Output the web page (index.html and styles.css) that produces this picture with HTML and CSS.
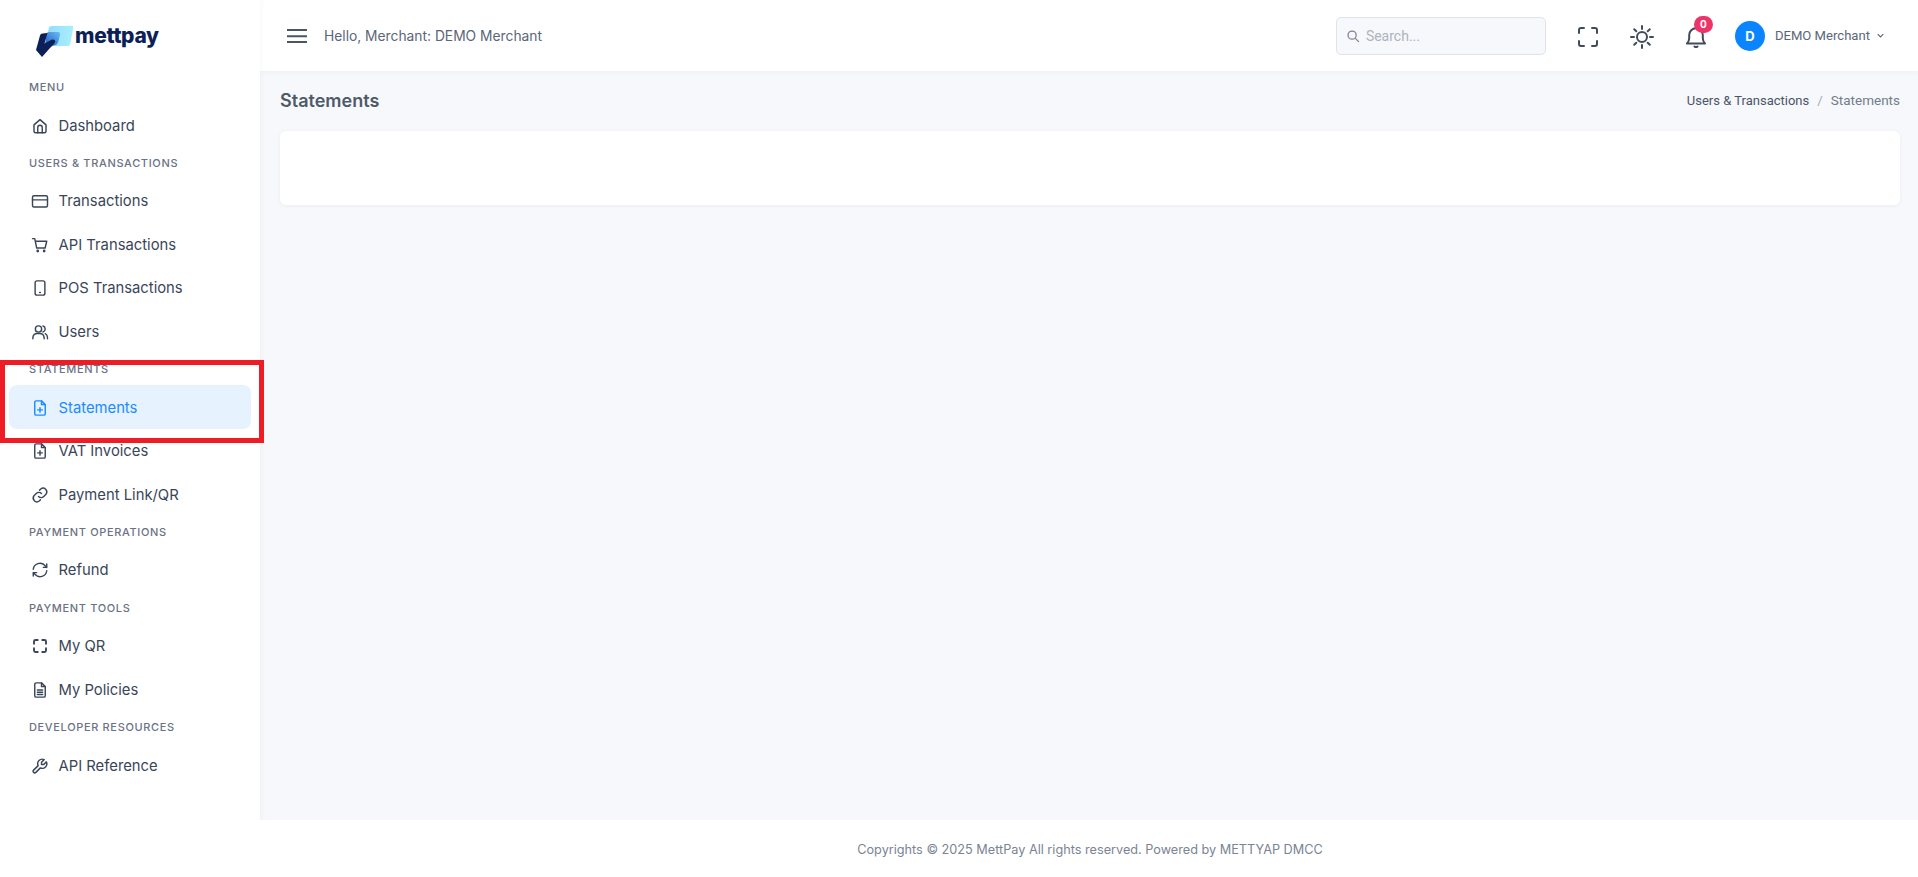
FILE: index.html
```html
<!DOCTYPE html>
<html lang="en">
<head>
<meta charset="utf-8">
<title>Statements</title>
<link rel="stylesheet" href="styles.css">
</head>
<body>
<div class="app">
  <aside class="sidebar">
    <div class="brand">
      <svg class="brand-mark" viewBox="0 0 40 34" width="40" height="34">
        <defs>
          <linearGradient id="g1" x1="0" y1="0" x2="1" y2="0"><stop offset="0" stop-color="#8fdcf8"/><stop offset="1" stop-color="#a9effd"/></linearGradient>
          <linearGradient id="g2" x1="0" y1="1" x2="1" y2="0"><stop offset="0" stop-color="#1c5fc9"/><stop offset="1" stop-color="#6cbcf2"/></linearGradient>
        </defs>
        <path d="M13 2.500Q13.600 1 15.500 1L36 .8Q37.600.8 37.300 2.500L34.200 19Q33.800 21 32.200 21L9 21Z" fill="url(#g1)"/>
        <path d="M10.500 8.500Q11 7 13 7H22Q24.500 7 24 9.500L22.500 16Q21.500 20.500 17 20.500H9Z" fill="url(#g2)"/>
        <path d="M0 25 4 10.500Q4.500 8.500 6.500 8.500L11.500 8 8.500 18.500 16 14.500Q20 14 19 17.500 17.500 20 14 23L6 32Z" fill="#0c1f56"/>
      </svg>
      <span class="brand-name">mettpay</span>
    </div>
    <nav class="nav">
      <div class="nav-label">Menu</div>
      <a class="nav-item"><svg class="ico" viewBox="0 0 24 24"><path d="M4 10.500 12 3.500l8 7V19a2 2 0 0 1-2 2H6a2 2 0 0 1-2-2Z"/><path d="M9 21v-7a3 3 0 0 1 6 0v7"/></svg>Dashboard</a>
      <div class="nav-label">Users &amp; Transactions</div>
      <a class="nav-item"><svg class="ico" viewBox="0 0 24 24"><rect x="2" y="5" width="20" height="15" rx="2"/><path d="M2 10.500h20"/></svg>Transactions</a>
      <a class="nav-item"><svg class="ico" viewBox="0 0 24 24"><path d="M2 3.500h3l2.600 12.500h11.200L21 7H6"/><circle cx="9" cy="20" r=".9"/><circle cx="17.500" cy="20" r=".9"/></svg>API Transactions</a>
      <a class="nav-item"><svg class="ico" viewBox="0 0 24 24"><rect x="5.500" y="2.500" width="13" height="19" rx="2.500"/><path d="M11.500 18h1"/></svg>POS Transactions</a>
      <a class="nav-item"><svg class="ico" viewBox="0 0 24 24"><circle cx="10" cy="8" r="4.200"/><path d="M2.500 21v-1.500a6 6 0 0 1 6-5.500h3a6 6 0 0 1 6 5.500V21"/><path d="M16 4a4.200 4.200 0 0 1 0 8M19 14.300a6 6 0 0 1 3 5.200V21"/></svg>Users</a>
      <div class="nav-label">Statements</div>
      <a class="nav-item active"><svg class="ico" viewBox="0 0 24 24"><path d="M14 2.500H7a2 2 0 0 0-2 2v15a2 2 0 0 0 2 2h10a2 2 0 0 0 2-2V7.500Z"/><path d="M14 2.500v5h5"/><path d="M12 11.500v6M9 14.500h6"/></svg>Statements</a>
      <a class="nav-item"><svg class="ico" viewBox="0 0 24 24"><path d="M14 2.500H7a2 2 0 0 0-2 2v15a2 2 0 0 0 2 2h10a2 2 0 0 0 2-2V7.500Z"/><path d="M14 2.500v5h5"/><path d="M12 11.500v6M9 14.500h6"/></svg>VAT Invoices</a>
      <a class="nav-item"><svg class="ico" viewBox="0 0 24 24"><path d="M10 14a5 5 0 0 0 7 0l3-3a5 5 0 0 0-7-7l-1.500 1.500"/><path d="M14 10a5 5 0 0 0-7 0l-3 3a5 5 0 0 0 7 7l1.500-1.500"/></svg>Payment Link/QR</a>
      <div class="nav-label">Payment Operations</div>
      <a class="nav-item"><svg class="ico" viewBox="0 0 24 24"><path d="M3 11a9 9 0 0 1 15.500-5L21 8.500V4M21 8.500h-4.500"/><path d="M21 13a9 9 0 0 1-15.500 5L3 15.500V20M3 15.500h4.500"/></svg>Refund</a>
      <div class="nav-label">Payment Tools</div>
      <a class="nav-item"><svg class="ico ico-bold" viewBox="0 0 24 24"><path d="M4 9V6a2 2 0 0 1 2-2h3M15 4h3a2 2 0 0 1 2 2v3M20 15v3a2 2 0 0 1-2 2h-3M9 20H6a2 2 0 0 1-2-2v-3"/></svg>My QR</a>
      <a class="nav-item"><svg class="ico" viewBox="0 0 24 24"><path d="M14 2.500H7a2 2 0 0 0-2 2v15a2 2 0 0 0 2 2h10a2 2 0 0 0 2-2V7.500Z"/><path d="M14 2.500v5h5M8.500 12h7M8.500 15h7M8.500 18h7"/></svg>My Policies</a>
      <div class="nav-label">Developer Resources</div>
      <a class="nav-item"><svg class="ico" viewBox="0 0 24 24"><path transform="matrix(-1 0 0 1 24 0)" d="M7 10h3V7L6.500 3.500a6 6 0 0 1 8 8l6 6a2 2 0 0 1-3 3l-6-6a6 6 0 0 1-8-8L7 10"/></svg>API Reference</a>
    </nav>
  </aside>

  <div class="main">
    <header class="topbar">
      <svg class="burger" viewBox="0 0 20 14" width="20" height="14"><path d="M0 1h20M0 7.300h20M0 13h20"/></svg>
      <span class="hello">Hello, Merchant: DEMO Merchant</span>
      <div class="top-right">
        <div class="search">
          <svg class="search-ico" viewBox="0 0 24 24" width="14" height="14"><circle cx="10.500" cy="10.500" r="7"/><path d="m16 16 6 6"/></svg>
          <span class="search-text">Search...</span>
        </div>
        <svg class="tool tool-scan" viewBox="0 0 20 20" width="20" height="20"><path d="M1 6V3a2 2 0 0 1 2-2h3M14 1h3a2 2 0 0 1 2 2v3M19 14v3a2 2 0 0 1-2 2h-3M6 19H3a2 2 0 0 1-2-2v-3"/></svg>
        <svg class="tool tool-sun" viewBox="0 0 24 24" width="24" height="24"><circle cx="12" cy="12" r="5"/><path d="M12 1v3M12 20v3M1 12h3M20 12h3M4.200 4.200l2.100 2.100M17.700 17.700l2.100 2.100M4.200 19.800l2.100-2.100M17.700 6.300l2.100-2.100"/></svg>
        <div class="bell-wrap">
          <svg class="tool" viewBox="0 0 20 22" width="20" height="22"><path d="M1 17.500h18c-1.600-1.600-2.200-3-2.200-5.500V9A6.800 6.800 0 0 0 3.200 9v3c0 2.500-.6 3.900-2.200 5.500Z"/><path d="M8.500 20.500q1.500 1.300 3 0"/></svg>
          <span class="badge">0</span>
        </div>
        <div class="user">
          <span class="avatar">D</span>
          <span class="user-name">DEMO Merchant</span>
          <svg class="chev" viewBox="0 0 10 6" width="7" height="5"><path d="m1 1 4 4 4-4"/></svg>
        </div>
      </div>
    </header>
    <main class="content">
      <div class="page-head">
        <h1 class="page-title">Statements</h1>
        <div class="crumbs"><span class="crumb">Users &amp; Transactions</span><span class="crumb-sep">/</span><span class="crumb-now">Statements</span></div>
      </div>
      <div class="card"></div>
    </main>
    <footer class="footer">Copyrights © 2025 MettPay All rights reserved. Powered by METTYAP DMCC</footer>
  </div>
</div>
<div class="highlight"></div>
</body>
</html>
```

FILE: styles.css
```css
* { box-sizing: border-box; }
html, body { margin: 0; height: 100%; }
body { font-family: "Inter", "Liberation Sans", sans-serif; color: #4a5568; background: #fff; position: relative; overflow: hidden; }
.app { display: flex; height: 877px; }

.sidebar { width: 260px; flex: none; background: #fff; box-shadow: 0 0 6px rgba(60, 70, 100, .06); position: relative; z-index: 2; }
.brand { height: 71px; display: flex; align-items: flex-start; padding: 25px 0 0 36px; }
.brand-mark { flex: none; }
.brand-name { font-family: "Inter", sans-serif; font-weight: 800; font-size: 21px; line-height: 22px; color: #0c1f56; margin-left: -1px; letter-spacing: -.3px; }

.nav { display: flex; flex-direction: column; }
.nav-label { height: 32.300px; padding: 8px 0 0 29px; font-size: 11px; line-height: 16px; font-weight: 500; letter-spacing: .65px; text-transform: uppercase; color: #6b7285; }
.nav-item { height: 43.500px; margin: 0 9px; padding: 1px 0 0 22px; border-radius: 8px; display: flex; align-items: center; gap: 9.500px; font-size: 14.800px; font-weight: 400; color: #3a4558; }
.nav-item.active { background: #e6f2fe; color: #1a8cff; }
.ico { width: 18px; height: 18px; flex: none; fill: none; stroke: currentColor; stroke-width: 1.900; stroke-linecap: round; stroke-linejoin: round; }
.ico-bold { stroke-width: 2.500; }

.main { flex: 1; min-width: 0; display: flex; flex-direction: column; }
.topbar { height: 71px; flex: none; background: #fff; display: flex; align-items: center; padding: 0 34px 0 27px; box-shadow: 0 1px 6px rgba(60, 70, 100, .05); position: relative; z-index: 1; }
.burger { flex: none; fill: none; stroke: #4a5568; stroke-width: 2; }
.hello { margin-left: 17px; font-size: 13.800px; color: #5a6678; }
.top-right { margin-left: auto; display: flex; align-items: center; }
.search { width: 210px; height: 38px; background: #f6f8fb; border: 1px solid #dfe3ea; border-radius: 5px; display: flex; align-items: center; padding-left: 9px; gap: 6px; }
.search-ico { fill: none; stroke: #7b8494; stroke-width: 2.200; flex: none; }
.search-text { font-family: "Roboto", sans-serif; font-size: 14px; color: #aeb4bd; }
.tool { flex: none; fill: none; stroke: #414b5c; stroke-width: 2; stroke-linecap: round; stroke-linejoin: round; display: block; }
.tool-scan { margin: 2px 0 0 32px; }
.tool-sun { margin: 2px 0 0 32px; }
.bell-wrap { position: relative; margin: 3px 0 0 32px; }
.badge { position: absolute; top: -10px; left: 8px; width: 19px; height: 17px; border-radius: 9px; background: #ec3468; color: #fff; font-size: 10px; font-weight: 700; line-height: 17px; text-align: center; }
.user { display: flex; align-items: center; margin-left: 29px; }
.avatar { width: 30px; height: 30px; border-radius: 50%; background: #0b84ff; color: #fff; font-size: 13px; font-weight: 700; display: flex; align-items: center; justify-content: center; }
.user-name { margin-left: 10px; font-family: "Roboto", sans-serif; font-size: 13.100px; color: #5a6678; }
.chev { margin-left: 7px; fill: none; stroke: #5a6678; stroke-width: 1.600; }

.content { flex: 1; background: #f6f8fb; padding: 0 18px 0 20px; }
.page-head { height: 60px; display: flex; align-items: center; justify-content: space-between; }
.page-title { margin: -2px 0 0; font-size: 18px; font-weight: 600; color: #4f5a68; }
.crumbs { display: flex; align-items: baseline; font-family: "Roboto", sans-serif; font-size: 13.500px; margin-top: -2px; }
.crumb { color: #4a5568; font-size: 13px; }
.crumb-sep { margin: 0 8px; color: #a6adb8; }
.crumb-now { color: #727c8c; }
.card { height: 74px; background: #fff; border-radius: 6px; box-shadow: 0 1px 4px rgba(60, 70, 100, .06); }
.footer { height: 57px; flex: none; background: #fff; display: flex; align-items: center; justify-content: center; padding: 2px 0 0 2px; font-size: 12.700px; color: #7a8493; position: relative; z-index: 3; }

.highlight { position: absolute; left: 0; top: 360px; width: 264px; height: 83px; border: 5px solid #ee1c25; z-index: 5; pointer-events: none; }
```
